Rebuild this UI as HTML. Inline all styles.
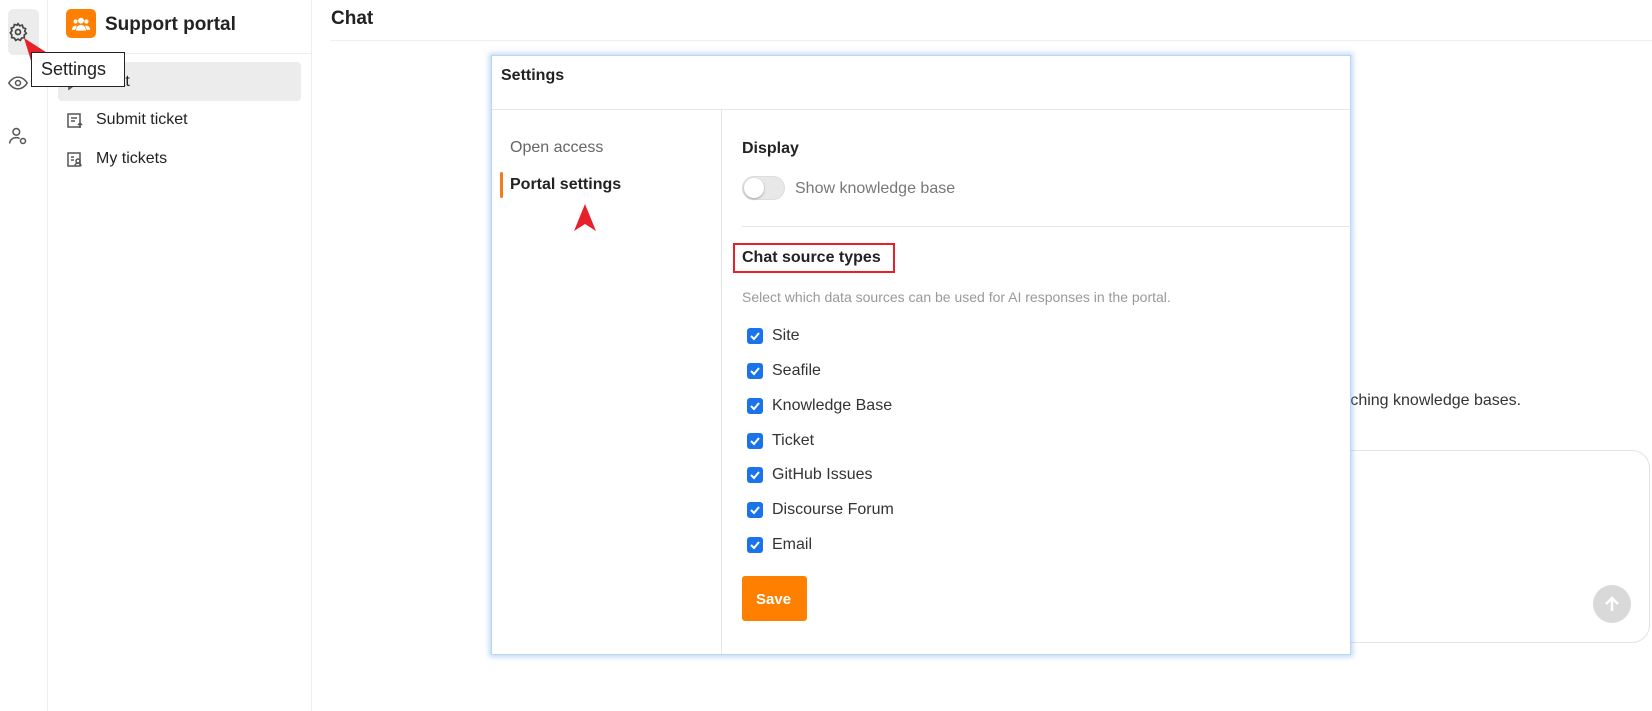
<!DOCTYPE html>
<html><head><meta charset="utf-8"><style>
*{box-sizing:border-box;margin:0;padding:0}
body{width:1652px;height:711px;position:relative;overflow:hidden;background:#fff;font-family:"Liberation Sans",sans-serif;color:#212529}
.a{position:absolute}
.t{position:absolute;white-space:nowrap;line-height:1}
.cb{position:absolute;left:747px;width:16px;height:16px;background:#1a73e8;border-radius:3px}
.cb svg{position:absolute;left:2px;top:2px}
.lbl{position:absolute;left:772px;font-size:16px;color:#333;line-height:1}
</style></head><body>
<div class="a" style="left:47px;top:0;width:1px;height:711px;background:#eee"></div>
<div class="a" style="left:311px;top:0;width:1px;height:711px;background:#eee"></div>
<div class="a" style="left:8px;top:9px;width:31px;height:46px;background:#ececec;border-radius:6px"></div>
<svg class="a" style="left:8px;top:22px" width="20" height="20" viewBox="0 0 24 24" fill="none" stroke="#444" stroke-width="2"><circle cx="12" cy="12" r="3"/><path d="M12 2l2 2.5 3.2-.8.9 3.2 3 1.2-1 3 1.9 2.6-2.6 1.9.2 3.2-3.2.4-1.6 2.8-2.8-1.5-2.8 1.5-1.6-2.8-3.2-.4.2-3.2L2.9 13l1.9-2.6-1-3 3-1.2.9-3.2 3.2.8z"/></svg>
<svg class="a" style="left:8px;top:74px" width="20" height="18" viewBox="0 0 24 20" fill="none" stroke="#555" stroke-width="1.8"><path d="M1 10s4-7 11-7 11 7 11 7-4 7-11 7S1 10 1 10z"/><circle cx="12" cy="10" r="3"/></svg>
<svg class="a" style="left:8px;top:126px" width="20" height="20" viewBox="0 0 24 24" fill="none" stroke="#555" stroke-width="1.8"><circle cx="10" cy="7" r="4"/><path d="M2 21c0-4 3.5-7 8-7 2 0 3 .4 4 1"/><circle cx="18" cy="18" r="3"/></svg>
<div class="a" style="left:66px;top:9px;width:30px;height:29px;background:#ff8000;border-radius:5px"></div>
<svg class="a" style="left:71px;top:14px" width="20" height="20" viewBox="0 0 24 24" fill="#fff"><circle cx="12" cy="8" r="3.5"/><circle cx="5.5" cy="9" r="2.5"/><circle cx="18.5" cy="9" r="2.5"/><path d="M6 20c0-4 2.5-7 6-7s6 3 6 7z"/><path d="M1 19c0-3 2-5 4.5-5 1 0 1.5.3 1.5.3L5 19z"/><path d="M23 19c0-3-2-5-4.5-5-1 0-1.5.3-1.5.3L19 19z"/></svg>
<div class="t" style="left:105px;top:15px;font-size:19px;font-weight:bold;color:#222">Support portal</div>
<div class="a" style="left:48px;top:53px;width:263px;height:1px;background:#eee"></div>
<div class="a" style="left:58px;top:62px;width:243px;height:39px;background:#ececec;border-radius:4px"></div>
<svg class="a" style="left:66px;top:73px" width="18" height="18" viewBox="0 0 18 18" fill="none" stroke="#555" stroke-width="1.5"><path d="M2 3h14v10H7l-4 3v-3H2z"/></svg>
<div class="t" style="left:96px;top:74px;font-size:16px;color:#222">Chat</div>
<svg class="a" style="left:66px;top:111px" width="18" height="18" viewBox="0 0 18 18" fill="none" stroke="#555" stroke-width="1.5"><rect x="2" y="3" width="12" height="13"/><path d="M5 7h6M5 10h4M14 12v5M12 14l2-2 2 2"/></svg>
<div class="t" style="left:96px;top:112px;font-size:16px;color:#222">Submit ticket</div>
<svg class="a" style="left:66px;top:150px" width="18" height="18" viewBox="0 0 18 18" fill="none" stroke="#555" stroke-width="1.5"><rect x="2" y="3" width="12" height="13"/><path d="M5 7h3M5 10h3"/><circle cx="12" cy="11" r="2"/><path d="M9 16c0-2 1.5-3 3-3s3 1 3 3"/></svg>
<div class="t" style="left:96px;top:151px;font-size:16px;color:#222">My tickets</div>
<svg class="a" style="left:22px;top:36px" width="36" height="30"><polygon points="2,2 30,20 18,20 10,28" fill="#e8202a"/></svg>
<div class="a" style="left:31px;top:52px;width:94px;height:35px;background:#fff;border:1px solid #222"></div>
<div class="t" style="left:41px;top:60px;font-size:18px;color:#222">Settings</div>
<div class="t" style="left:331px;top:9px;font-size:19px;font-weight:bold;color:#222">Chat</div>
<div class="a" style="left:331px;top:40px;width:1321px;height:1px;background:#eee"></div>
<div class="t" style="left:1345px;top:393px;font-size:16px;color:#333">rching knowledge bases.</div>
<div class="a" style="left:1300px;top:450px;width:350px;height:193px;border:1px solid #e3e3e3;border-radius:18px"></div>
<div class="a" style="left:1593px;top:585px;width:38px;height:38px;border-radius:50%;background:#d9d9d9"></div>
<svg class="a" style="left:1603px;top:595px" width="18" height="18" viewBox="0 0 18 18" fill="none" stroke="#fff" stroke-width="2.5"><path d="M9 16V3M3 9l6-6 6 6"/></svg>
<div class="a" style="left:491px;top:55px;width:860px;height:600px;background:#fff;border:1px solid #bcd5f5;box-shadow:0 0 5px 2px rgba(120,170,240,.45)"></div>
<div class="t" style="left:501px;top:68px;font-size:16px;font-weight:bold;color:#222">Settings</div>
<div class="a" style="left:492px;top:109px;width:858px;height:1px;background:#e6e6e6"></div>
<div class="a" style="left:721px;top:110px;width:1px;height:544px;background:#e6e6e6"></div>
<div class="t" style="left:510px;top:140px;font-size:16px;color:#666">Open access</div>
<div class="a" style="left:500px;top:172px;width:3px;height:26px;background:#ef7d18;border-radius:2px"></div>
<div class="t" style="left:510px;top:177px;font-size:16px;font-weight:bold;color:#222">Portal settings</div>
<svg class="a" style="left:570px;top:203px" width="30" height="30"><polygon points="15,1 26,28 15,21 4,28" fill="#e8202a"/></svg>
<div class="t" style="left:742px;top:141px;font-size:16px;font-weight:bold;color:#222">Display</div>
<div class="a" style="left:742px;top:176px;width:43px;height:24px;border-radius:12px;background:#e8e8e8;border:1px solid #ddd"></div>
<div class="a" style="left:744px;top:178px;width:20px;height:20px;border-radius:50%;background:#fff;box-shadow:0 1px 2px rgba(0,0,0,.3)"></div>
<div class="t" style="left:795px;top:181px;font-size:16px;color:#777">Show knowledge base</div>
<div class="a" style="left:742px;top:226px;width:609px;height:1px;background:#e6e6e6"></div>
<div class="a" style="left:733px;top:243px;width:162px;height:30px;border:2px solid #e8202a"></div>
<div class="t" style="left:742px;top:250px;font-size:16px;font-weight:bold;color:#222">Chat source types</div>
<div class="t" style="left:742px;top:290px;font-size:14px;color:#999">Select which data sources can be used for AI responses in the portal.</div>
<div class="cb" style="top:328px"><svg width="12" height="12" viewBox="0 0 12 12" fill="none" stroke="#fff" stroke-width="2"><path d="M2 6l3 3 5-6"/></svg></div><div class="lbl" style="top:328px">Site</div>
<div class="cb" style="top:363px"><svg width="12" height="12" viewBox="0 0 12 12" fill="none" stroke="#fff" stroke-width="2"><path d="M2 6l3 3 5-6"/></svg></div><div class="lbl" style="top:363px">Seafile</div>
<div class="cb" style="top:398px"><svg width="12" height="12" viewBox="0 0 12 12" fill="none" stroke="#fff" stroke-width="2"><path d="M2 6l3 3 5-6"/></svg></div><div class="lbl" style="top:398px">Knowledge Base</div>
<div class="cb" style="top:433px"><svg width="12" height="12" viewBox="0 0 12 12" fill="none" stroke="#fff" stroke-width="2"><path d="M2 6l3 3 5-6"/></svg></div><div class="lbl" style="top:433px">Ticket</div>
<div class="cb" style="top:467px"><svg width="12" height="12" viewBox="0 0 12 12" fill="none" stroke="#fff" stroke-width="2"><path d="M2 6l3 3 5-6"/></svg></div><div class="lbl" style="top:467px">GitHub Issues</div>
<div class="cb" style="top:502px"><svg width="12" height="12" viewBox="0 0 12 12" fill="none" stroke="#fff" stroke-width="2"><path d="M2 6l3 3 5-6"/></svg></div><div class="lbl" style="top:502px">Discourse Forum</div>
<div class="cb" style="top:537px"><svg width="12" height="12" viewBox="0 0 12 12" fill="none" stroke="#fff" stroke-width="2"><path d="M2 6l3 3 5-6"/></svg></div><div class="lbl" style="top:537px">Email</div>
<div class="a" style="left:742px;top:576px;width:65px;height:45px;background:#ff8000;border-radius:3px"></div>
<div class="t" style="left:756px;top:592px;font-size:15px;font-weight:bold;color:#fff">Save</div>
</body></html>
